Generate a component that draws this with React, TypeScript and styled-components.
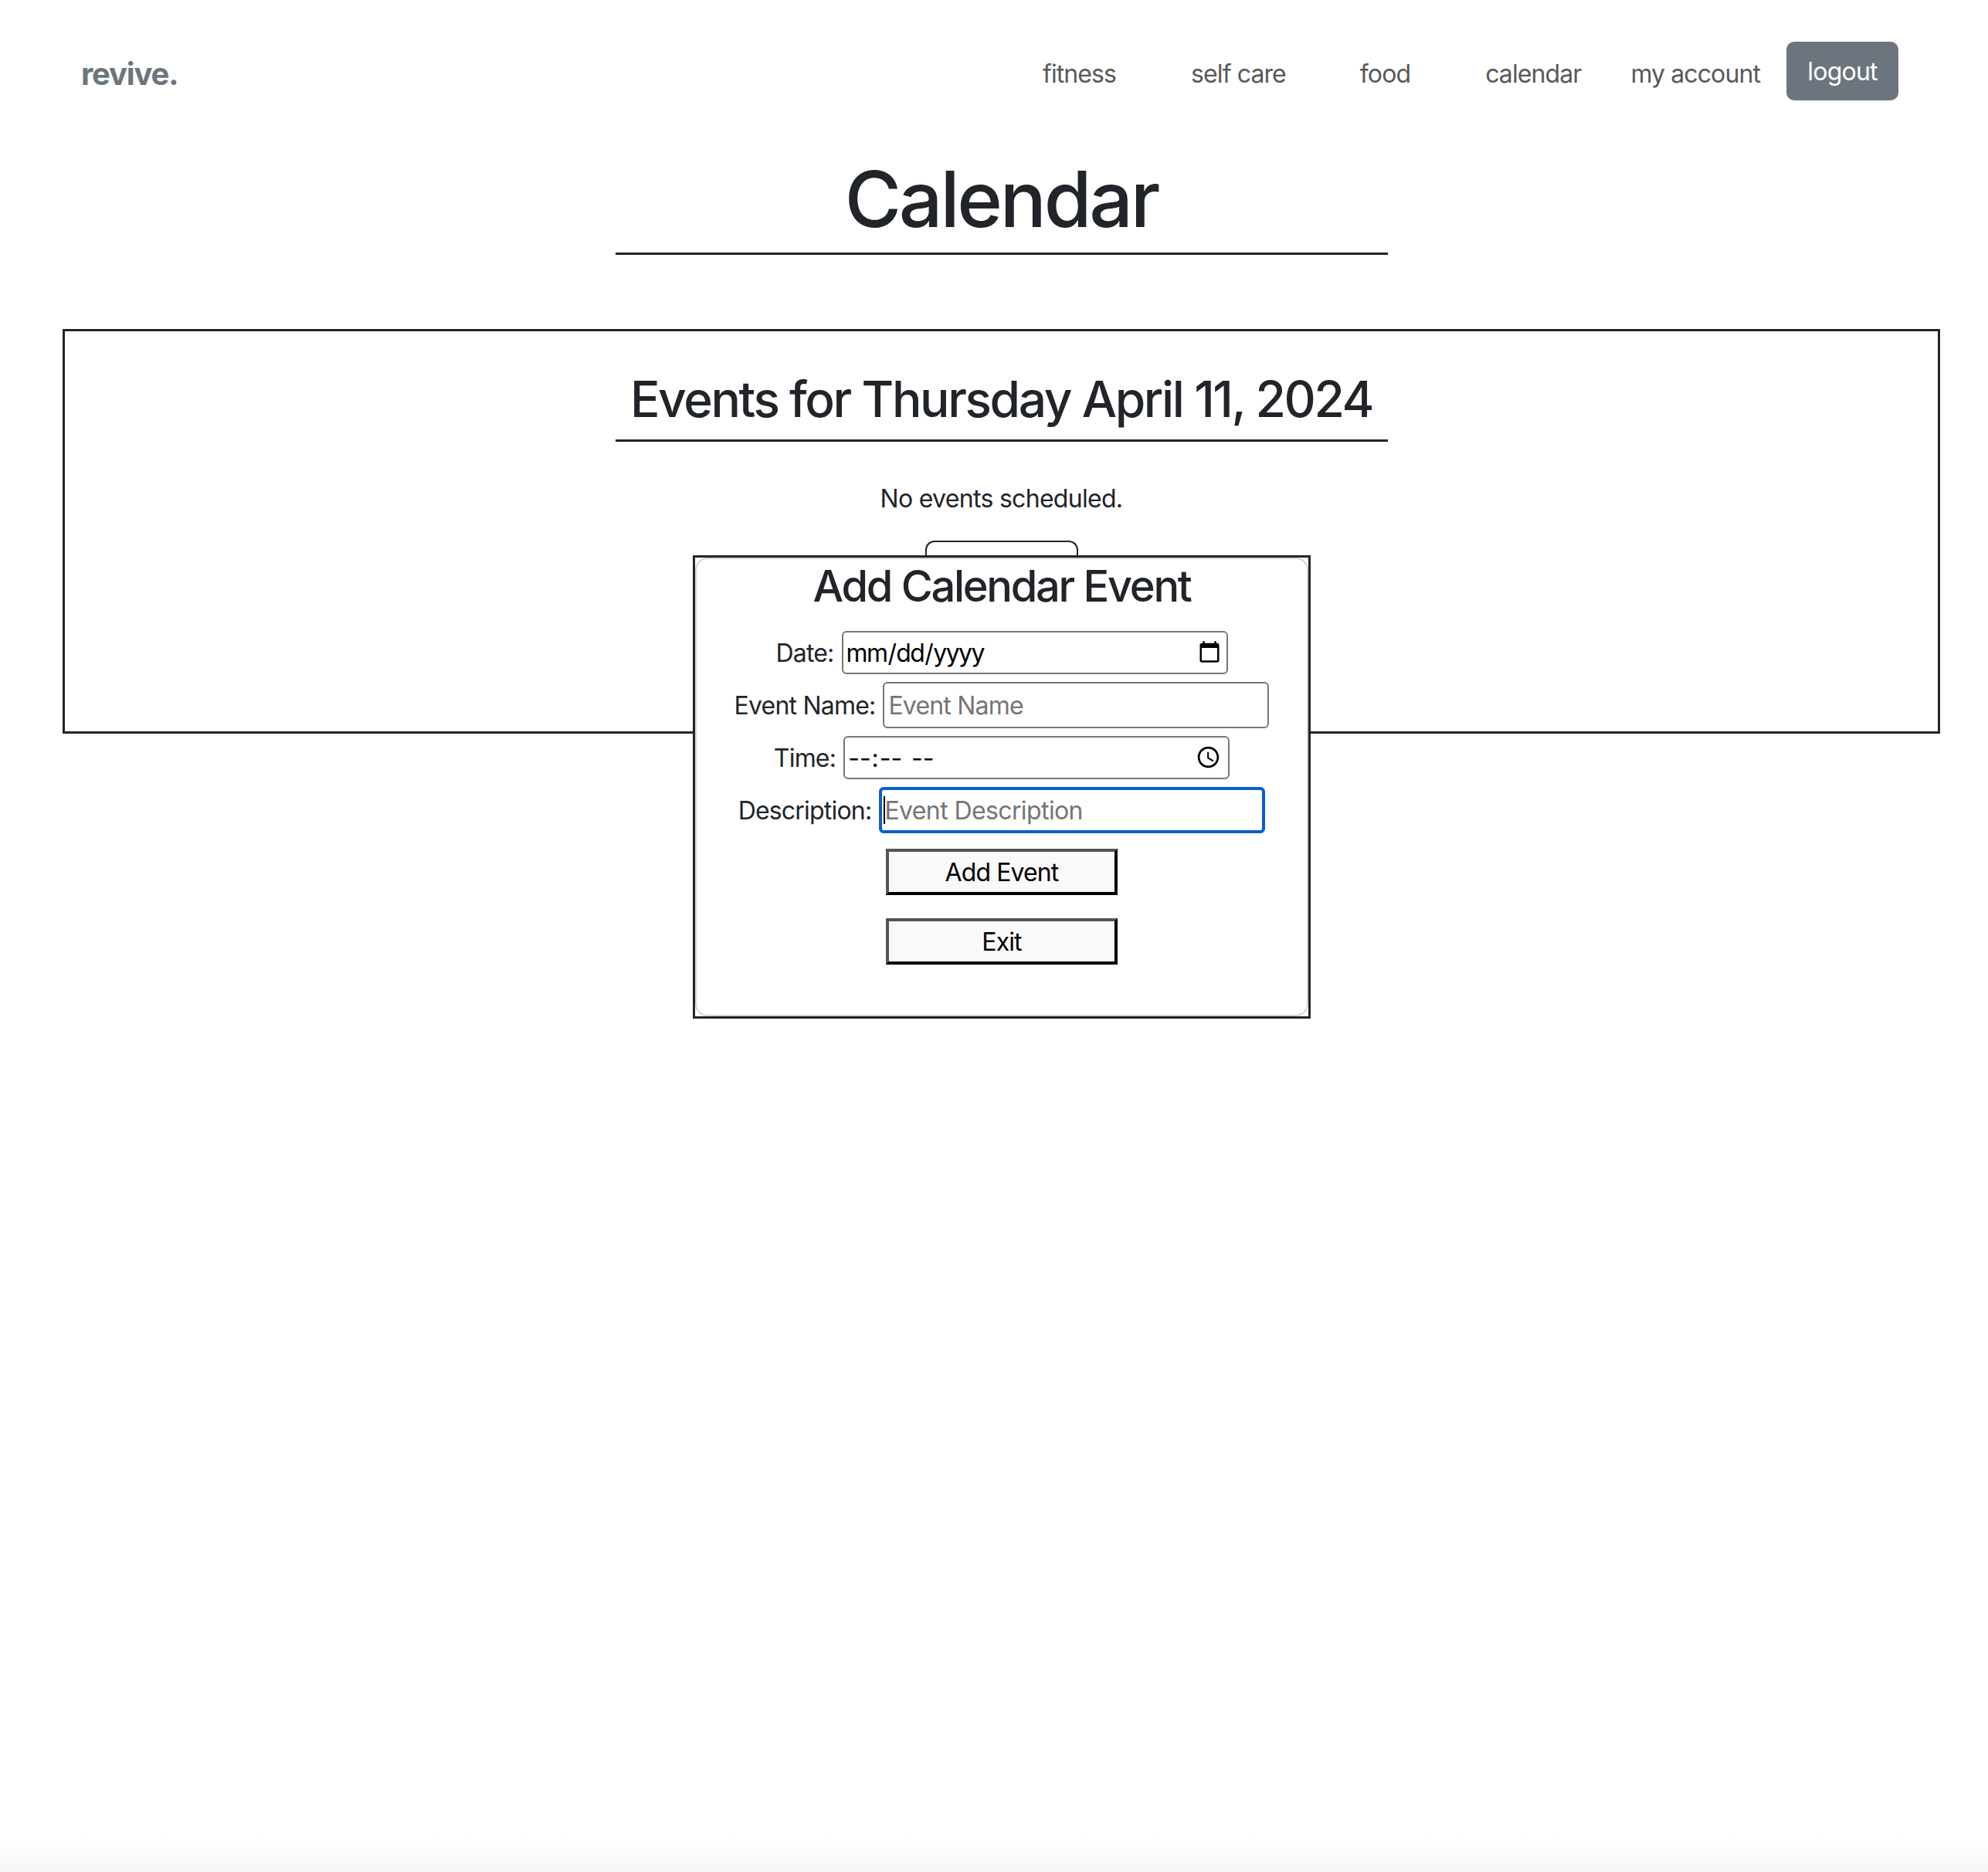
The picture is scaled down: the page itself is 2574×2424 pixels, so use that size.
import React from "react";
import styled, { createGlobalStyle } from "styled-components";

const GlobalStyle = createGlobalStyle`
	html, body {
		margin: 0;
		padding: 0;
		background: #fff;
	}
	* {
		box-sizing: border-box;
	}
	body {
		font-family: Inter, "Liberation Sans", sans-serif;
		color: #212529;
	}
`;

const Page = styled.div`
	position: relative;
	display: flex;
	flex-direction: column;
	min-height: 2424px;
`;

const Navbar = styled.nav`
	display: flex;
	align-items: center;
	justify-content: space-between;
	height: 130px;
	padding: 54px 116px 0 105px;
`;

const Brand = styled.a`
	font-size: 40px;
	font-weight: 700;
	letter-spacing: -1.2px;
	color: #6c757d;
	transform: translateY(3px);
`;

const NavLinks = styled.div`
	display: flex;
	align-items: center;
`;

const NavLink = styled.a<{ $gap?: number }>`
	padding: 0 32px;
	margin-right: ${({ $gap = 0 }) => $gap}px;
	font-size: 32px;
	letter-spacing: -0.9px;
	color: #595959;
	transform: translateY(3px);
`;

const LogoutButton = styled.button`
	width: 145px;
	height: 76px;
	margin-left: 2px;
	padding: 0;
	border: 0;
	border-radius: 10px;
	background: #6c757d;
	color: #fff;
	font-family: inherit;
	font-size: 32px;
	letter-spacing: -0.8px;
`;

const Main = styled.main`
	flex: 1;
	display: flex;
	flex-direction: column;
	align-items: center;
	padding: 0 62px 0 81px;
`;

const Underlined = styled.div`
	width: 1000px;
	border-bottom: 3px solid #212529;
	text-align: center;
`;

const PageTitle = styled.h1`
	margin: 0;
	padding-top: 58px;
	font-size: 100px;
	line-height: 139px;
	font-weight: 500;
	letter-spacing: -3.25px;
`;

const EventsBox = styled.section`
	align-self: stretch;
	display: flex;
	flex-direction: column;
	align-items: center;
	height: 524px;
	margin-top: 96px;
	border: 3px solid #212529;
`;

const EventsTitle = styled.h2`
	margin: 0;
	padding-top: 35px;
	font-size: 64px;
	line-height: 105px;
	font-weight: 500;
	letter-spacing: -2.4px;
`;

const EmptyText = styled.p`
	margin: 50px 0 0;
	font-size: 32px;
	line-height: 48px;
	letter-spacing: -0.7px;
`;

const HiddenTab = styled.div`
	position: absolute;
	left: 1198px;
	top: 700px;
	width: 198px;
	height: 24px;
	border: 2px solid #212529;
	border-bottom: 0;
	border-radius: 12px 12px 0 0;
`;

const Dialog = styled.div`
	position: absolute;
	left: 897px;
	top: 719px;
	width: 800px;
	height: 600px;
	display: flex;
	border: 3px solid #212529;
	background: #fff;
`;

const DialogPanel = styled.div`
	flex: 1;
	display: flex;
	flex-direction: column;
	align-items: center;
	border: 2px solid #d2d2d2;
	border-radius: 16px;
`;

const DialogTitle = styled.h3`
	margin: 0;
	font-size: 56px;
	line-height: 70px;
	font-weight: 500;
	letter-spacing: -2.3px;
`;

const FormRow = styled.div<{ $top: number }>`
	display: flex;
	align-items: center;
	gap: 10px;
	margin-top: ${({ $top }) => $top}px;
`;

const FieldLabel = styled.label`
	font-size: 32px;
	letter-spacing: -0.8px;
	white-space: nowrap;
`;

const FieldWrap = styled.div`
	position: relative;
`;

const Field = styled.input<{ $h: number; $pl: number; $pr?: number; $track?: number; $focused?: boolean }>`
	display: block;
	width: 500px;
	height: ${({ $h }) => $h}px;
	padding: 0 ${({ $pr = 6 }) => $pr}px 0 ${({ $pl }) => $pl}px;
	border: ${({ $focused }) => ($focused ? "4px solid #0a5fcc" : "2px solid #767676")};
	border-radius: 6px;
	outline: none;
	background: #fff;
	color: #000;
	font-family: inherit;
	font-size: 32px;
	letter-spacing: ${({ $track = -0.8 }) => $track}px;
	&::placeholder {
		color: #757575;
		opacity: 1;
	}
	&::-webkit-datetime-edit {
		letter-spacing: -1.6px;
	}
	&::-webkit-datetime-edit-ampm-field {
		margin-left: 4px;
	}
`;

const Caret = styled.span`
	position: absolute;
	left: 6px;
	top: 12px;
	width: 2px;
	height: 36px;
	background: #000;
`;

const ActionButton = styled.button<{ $top: number }>`
	display: block;
	width: 300px;
	height: 60px;
	margin-top: ${({ $top }) => $top}px;
	border: 4px solid;
	border-color: #555 #000 #000 #555;
	background: #f9f9f9;
	color: #000;
	font-family: inherit;
	font-size: 32px;
	letter-spacing: -0.9px;
`;

const BottomFade = styled.div`
	height: 45px;
	background: linear-gradient(to bottom, #ffffff, #f5f5f5);
`;

const App = () => {
	return (
		<Page>
			<GlobalStyle />
			<Navbar>
				<Brand>revive.</Brand>
				<NavLinks>
					<NavLink $gap={33}>fitness</NavLink>
					<NavLink $gap={32}>self care</NavLink>
					<NavLink $gap={33}>food</NavLink>
					<NavLink>calendar</NavLink>
					<NavLink>my account</NavLink>
					<LogoutButton>logout</LogoutButton>
				</NavLinks>
			</Navbar>
			<Main>
				<Underlined>
					<PageTitle>Calendar</PageTitle>
				</Underlined>
				<EventsBox>
					<Underlined>
						<EventsTitle>Events for Thursday April 11, 2024</EventsTitle>
					</Underlined>
					<EmptyText>No events scheduled.</EmptyText>
				</EventsBox>
			</Main>
			<HiddenTab />
			<Dialog>
				<DialogPanel>
					<DialogTitle>Add Calendar Event</DialogTitle>
					<FormRow $top={23}>
						<FieldLabel>Date:</FieldLabel>
						<Field type="date" $h={56} $pl={3} $pr={4} />
					</FormRow>
					<FormRow $top={10}>
						<FieldLabel>Event Name:</FieldLabel>
						<Field type="text" placeholder="Event Name" $h={60} $pl={5} />
					</FormRow>
					<FormRow $top={10}>
						<FieldLabel>Time:</FieldLabel>
						<Field type="time" $h={56} $pl={3} />
					</FormRow>
					<FormRow $top={10}>
						<FieldLabel>Description:</FieldLabel>
						<FieldWrap>
							<Field type="text" placeholder="Event Description" $h={60} $pl={3} $track={-0.6} $focused />
							<Caret />
						</FieldWrap>
					</FormRow>
					<ActionButton $top={20}>Add Event</ActionButton>
					<ActionButton $top={30}>Exit</ActionButton>
				</DialogPanel>
			</Dialog>
			<BottomFade />
		</Page>
	);
};

export default App;
